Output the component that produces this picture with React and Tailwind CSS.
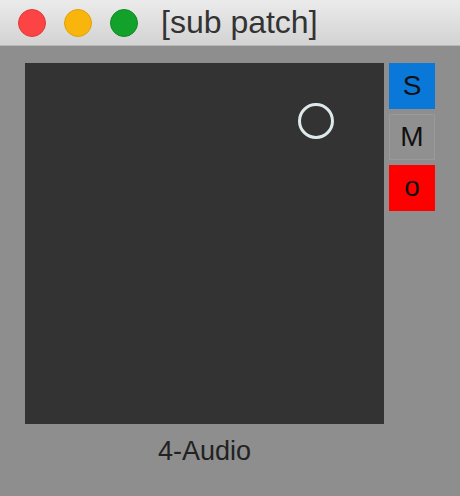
export default function App() {
  return (
    <div className="w-[460px] h-[496px] flex flex-col bg-[#8e8e8e] font-['Liberation_Sans',Arial,sans-serif] overflow-hidden">
      {/* Title bar */}
      <div className="h-[46px] flex items-center pl-[18px] bg-gradient-to-b from-[#ebebeb] to-[#d3d3d3] border-b border-[#b8b8b8]">
        <div className="flex gap-[18px]">
          <span className="w-[28px] h-[28px] rounded-full bg-[#fc4444] border border-[#e03a3a]" />
          <span className="w-[28px] h-[28px] rounded-full bg-[#f9b50c] border border-[#e0a20a]" />
          <span className="w-[28px] h-[28px] rounded-full bg-[#12a12a] border border-[#0f8a23]" />
        </div>
        <span className="ml-[23px] text-[32px] leading-none text-[#333] -mt-[1px]">[sub patch]</span>
      </div>

      {/* Body */}
      <div className="flex pt-[17px] pl-[25px] gap-[5px]">
        <div className="flex flex-col items-center">
          <div className="w-[359px] h-[361px] bg-[#333333] relative">
            <span className="absolute left-[273px] top-[40px] w-[36px] h-[36px] rounded-full border-[3px] border-[#dde9ea]" />
          </div>
          <div className="mt-[14px] text-[27px] leading-none text-[#222]">4-Audio</div>
        </div>
        <div className="flex flex-col gap-[5px]">
          <div className="w-[46px] h-[46px] bg-[#0a78d8] flex items-center justify-center text-[28px] leading-none text-[#111]">S</div>
          <div className="w-[46px] h-[46px] bg-[#909090] border border-[#999] flex items-center justify-center text-[28px] leading-none text-[#111]">M</div>
          <div className="w-[46px] h-[46px] bg-[#ff0000] flex items-center justify-center text-[28px] leading-none text-[#111] pb-[2px]">o</div>
        </div>
      </div>
    </div>
  );
}
